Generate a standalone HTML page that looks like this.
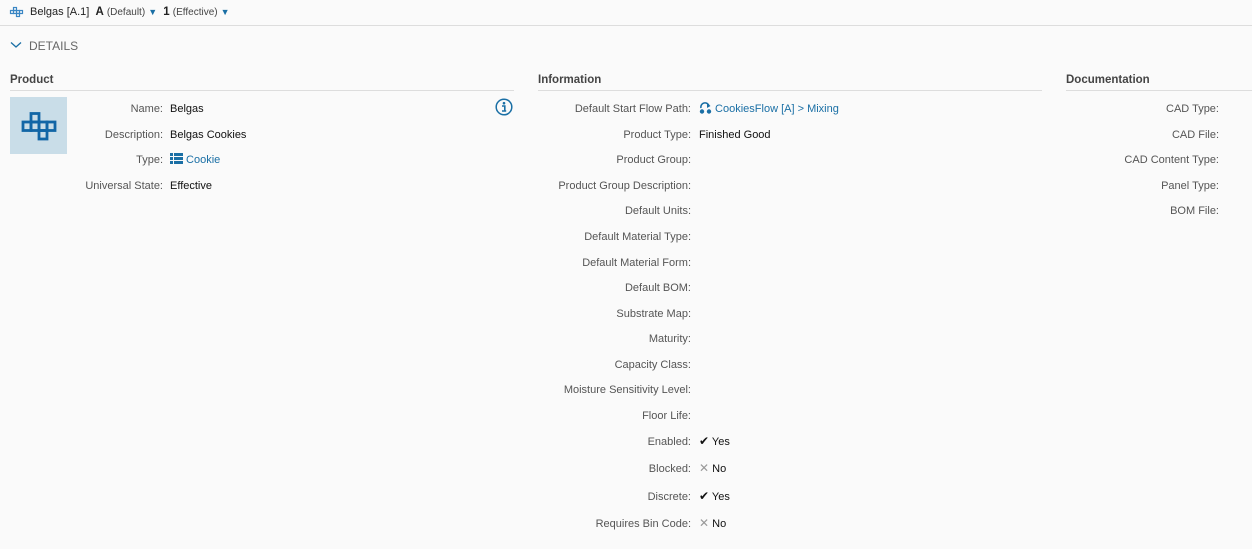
<!DOCTYPE html>
<html><head><style>
*{margin:0;padding:0;box-sizing:border-box}
body{width:1252px;height:549px;background:#fafafa;font-family:"Liberation Sans",sans-serif;font-size:11px;color:#222;position:relative;overflow:hidden}
.a{position:absolute;white-space:nowrap}
.l{position:absolute;text-align:right;color:#555;white-space:nowrap}
.v{position:absolute;white-space:nowrap;color:#111}
.lk{color:#1a6fa5}
.h{position:absolute;font-weight:bold;font-size:11.5px;color:#444}
.line{position:absolute;height:1px;background:#ddd}
</style></head><body>
<div class="line" style="left:0;top:25px;width:1252px;background:#ddd"></div>
<svg class="a" style="left:9px;top:6px" width="16" height="12" viewBox="0 0 16 12"><g fill="none" stroke="#3a86c4" stroke-width="1.2"><rect x="4.5" y="1.5" width="3" height="3"/><rect x="1.5" y="4.5" width="3" height="3"/><rect x="4.5" y="4.5" width="3" height="3"/><rect x="7.5" y="4.5" width="3" height="3"/><rect x="10.5" y="4.5" width="3" height="3"/><rect x="7.5" y="7.5" width="3" height="3"/></g></svg>
<div class="a" style="left:30px;top:6px">Belgas [A.1] &nbsp;<b style="font-size:11.5px">A</b> <span style="font-size:10px;color:#444">(Default)</span> <span style="color:#1a6fa5;font-size:9px">▼</span> &nbsp;<b style="font-size:11.5px">1</b> <span style="font-size:10px;color:#444">(Effective)</span> <span style="color:#1a6fa5;font-size:9px">▼</span></div>
<svg class="a" style="left:10px;top:41px" width="12" height="8"><path d="M1 1.5 L6 6 L11 1.5" fill="none" stroke="#1a6fa5" stroke-width="1.3"/></svg>
<div class="a" style="left:29px;top:39px;font-size:12px;color:#666">DETAILS</div>

<div class="h" style="left:10px;top:74px">Product</div>
<div class="line" style="left:10px;top:90px;width:504px"></div>
<div class="h" style="left:538px;top:74px">Information</div>
<div class="line" style="left:538px;top:90px;width:504px"></div>
<div class="h" style="left:1066px;top:74px">Documentation</div>
<div class="line" style="left:1066px;top:90px;width:186px"></div>

<div class="a" style="left:10px;top:97px;width:57px;height:57px;background:#c9dde8"></div>
<svg class="a" style="left:10px;top:97px" width="57" height="57"><g fill="none" stroke="#1266a6" stroke-width="2.8"><rect x="21" y="16.5" width="8" height="8.5"/><rect x="13" y="25" width="8" height="8.5"/><rect x="21" y="25" width="8" height="8.5"/><rect x="29" y="25" width="8" height="8.5"/><rect x="37" y="25" width="8" height="8.5"/><rect x="29" y="33.5" width="8" height="8.5"/></g></svg>

<div class="l" style="right:1089px;top:103px">Name:</div><div class="v" style="left:170px;top:103px">Belgas</div>
<div class="l" style="right:1089px;top:129px">Description:</div><div class="v" style="left:170px;top:129px">Belgas Cookies</div>
<div class="l" style="right:1089px;top:154px">Type:</div><div class="v lk" style="left:170px;top:153px"><svg width="13" height="11" style="vertical-align:-1px"><g fill="#1a6fa5"><rect x="0" y="0" width="3" height="3"/><rect x="4" y="0" width="9" height="3"/><rect x="0" y="4" width="3" height="3"/><rect x="4" y="4" width="9" height="3"/><rect x="0" y="8" width="3" height="3"/><rect x="4" y="8" width="9" height="3"/></g></svg> Cookie</div>
<div class="l" style="right:1089px;top:180px">Universal State:</div><div class="v" style="left:170px;top:180px">Effective</div>
<svg class="a" style="left:495px;top:98px" width="18" height="18"><circle cx="9" cy="9" r="7.8" fill="none" stroke="#1a6fa5" stroke-width="1.5"/><circle cx="9" cy="5.2" r="1.3" fill="#1a6fa5"/><path d="M7 8h2.8v4.8M7 13h4.2" fill="none" stroke="#1a6fa5" stroke-width="1.6"/></svg>

<div class="l" style="right:561px;top:103px">Default Start Flow Path:</div><div class="v lk" style="left:699px;top:102px"><svg width="13" height="12" style="vertical-align:-2px"><path d="M2 6 A4 4 0 0 1 10 4" fill="none" stroke="#1a6fa5" stroke-width="1.6"/><path d="M8 1 L11.5 4 L8 6z" fill="#1a6fa5"/><circle cx="3" cy="9.5" r="2.2" fill="#1a6fa5"/><circle cx="10" cy="9.5" r="2.2" fill="#1a6fa5"/></svg> CookiesFlow [A] &gt; Mixing</div>
<div class="l" style="right:561px;top:129px">Product Type:</div><div class="v" style="left:699px;top:129px">Finished Good</div>
<div class="l" style="right:561px;top:154px">Product Group:</div>
<div class="l" style="right:561px;top:180px">Product Group Description:</div>
<div class="l" style="right:561px;top:205px">Default Units:</div>
<div class="l" style="right:561px;top:231px">Default Material Type:</div>
<div class="l" style="right:561px;top:257px">Default Material Form:</div>
<div class="l" style="right:561px;top:282px">Default BOM:</div>
<div class="l" style="right:561px;top:308px">Substrate Map:</div>
<div class="l" style="right:561px;top:333px">Maturity:</div>
<div class="l" style="right:561px;top:359px">Capacity Class:</div>
<div class="l" style="right:561px;top:384px">Moisture Sensitivity Level:</div>
<div class="l" style="right:561px;top:410px">Floor Life:</div>
<div class="l" style="right:561px;top:436px">Enabled:</div><div class="v" style="left:699px;top:434px"><span style="font-size:12px">✔</span> Yes</div>
<div class="l" style="right:561px;top:463px">Blocked:</div><div class="v" style="left:699px;top:461px"><span style="color:#999;font-size:12px">✕</span> No</div>
<div class="l" style="right:561px;top:491px">Discrete:</div><div class="v" style="left:699px;top:489px"><span style="font-size:12px">✔</span> Yes</div>
<div class="l" style="right:561px;top:518px">Requires Bin Code:</div><div class="v" style="left:699px;top:516px"><span style="color:#999;font-size:12px">✕</span> No</div>

<div class="l" style="right:33px;top:103px">CAD Type:</div>
<div class="l" style="right:33px;top:129px">CAD File:</div>
<div class="l" style="right:33px;top:154px">CAD Content Type:</div>
<div class="l" style="right:33px;top:180px">Panel Type:</div>
<div class="l" style="right:33px;top:205px">BOM File:</div>
</body></html>
